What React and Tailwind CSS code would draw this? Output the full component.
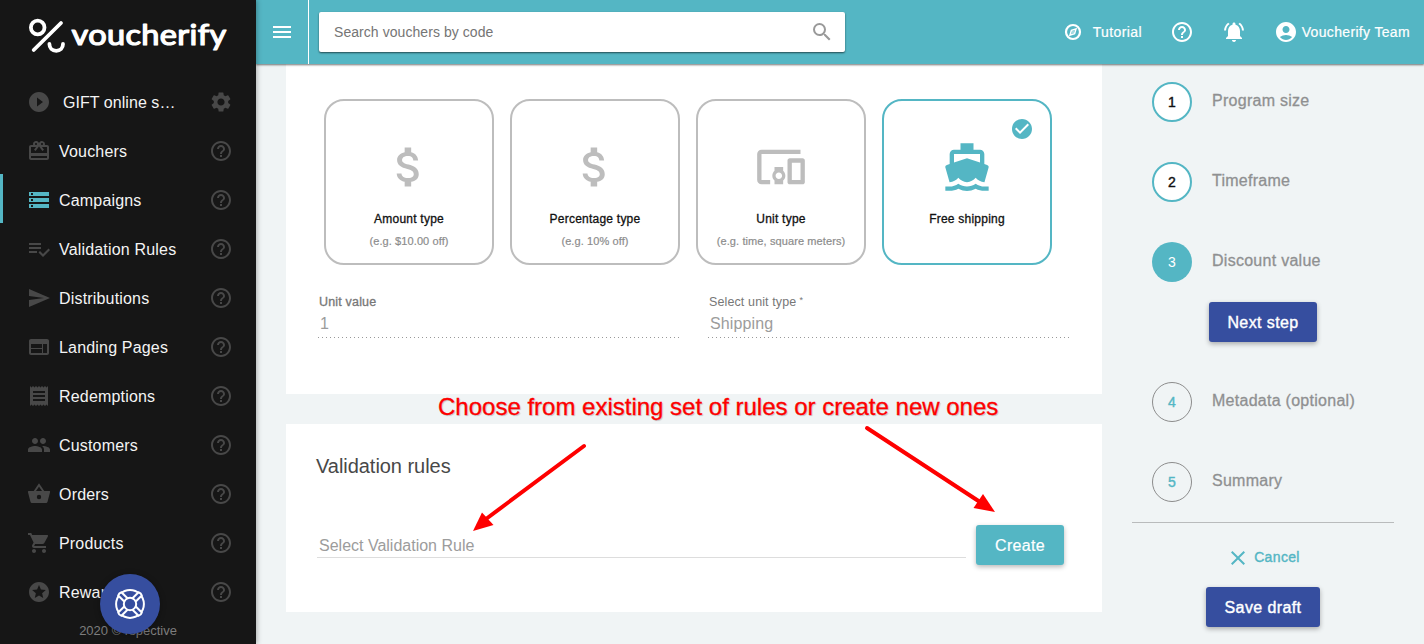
import React from "react";
import {
  MdPlayCircleFilled,
  MdSettings,
  MdRedeem,
  MdStorage,
  MdSend,
  MdWeb,
  MdReceipt,
  MdGroup,
  MdShoppingCart,
  MdStars,
  MdHelpOutline,
  MdNotificationsActive,
  MdAccountCircle,
  MdSearch,
  MdMenu,
  MdAttachMoney,
  MdDevicesOther,
  MdDirectionsBoat,
  MdCheckCircle,
  MdClose,
} from "react-icons/md";

function ListCheckIcon({ size = 24 }) {
  return (
    <svg viewBox="0 0 24 24" width={size} height={size} fill="currentColor">
      <path d="M14 10H2v2h12v-2zm0-4H2v2h12V6zM2 16h8v-2H2v2zm19.500-4.500L23 13l-6.990 7-4.510-4.500L13 14l3.010 3 5.490-5.500z" />
    </svg>
  );
}

function BasketIcon({ size = 24 }) {
  return (
    <svg viewBox="0 0 24 24" width={size} height={size}>
      <path d="M7.500 9.500 12 3l4.500 6.500" fill="none" stroke="currentColor" strokeWidth="1.900" />
      <path
        fill="currentColor"
        fillRule="evenodd"
        d="M1.600 9h20.800c.5 0 .8.400.7.900l-2.500 9.500c-.2.900-1 1.600-2 1.600H5.400c-1 0-1.800-.7-2-1.600L.9 9.900c-.1-.5.200-.9.7-.9zM12 12.800a2.200 2.200 0 1 0 0 4.400 2.200 2.200 0 0 0 0-4.400z"
      />
    </svg>
  );
}

function CompassIcon() {
  return (
    <svg viewBox="0 0 18 18" width="18" height="18" fill="none" stroke="currentColor">
      <circle cx="9" cy="9" r="7" strokeWidth="2.200" />
      <path d="M12 6 7.400 7.400 6 12l4.600-1.400z" strokeWidth="1.500" />
      <circle cx="9" cy="9" r=".5" strokeWidth=".8" />
    </svg>
  );
}

function LifeRingIcon() {
  return (
    <svg viewBox="0 0 32 32" width="32" height="32" fill="none" stroke="#fff" strokeWidth="2" strokeLinejoin="round">
      <circle cx="16" cy="16" r="13.900" />
      {[45, 135, 225, 315].map((a) => (
        <path key={a} d="M13.700 10.500V1.600Q16 .2 18.300 1.600V10.500" fill="#364e9f" transform={`rotate(${a} 16 16)`} />
      ))}
      <circle cx="16" cy="16" r="6.200" fill="#364e9f" />
    </svg>
  );
}

const nav = [
  { label: "Vouchers", icon: MdRedeem },
  { label: "Campaigns", icon: MdStorage, active: true },
  { label: "Validation Rules", icon: ListCheckIcon },
  { label: "Distributions", icon: MdSend },
  { label: "Landing Pages", icon: MdWeb },
  { label: "Redemptions", icon: MdReceipt },
  { label: "Customers", icon: MdGroup },
  { label: "Orders", icon: BasketIcon },
  { label: "Products", icon: MdShoppingCart },
  { label: "Rewards", icon: MdStars },
];

function Logo() {
  return (
    <div className="flex h-[76px] items-start pl-[28px] pt-[18px] text-white">
      <svg width="37" height="36" viewBox="0 0 37 36" fill="none" stroke="currentColor" strokeWidth="3.800" strokeLinecap="round">
        <circle cx="9.700" cy="9.500" r="6.800" />
        <path d="M33 5 5.700 32" />
        <path d="M21.400 26c0 4 2.800 6.800 6.800 6.800s6.800-2.800 6.800-6.800" />
      </svg>
      <svg width="162" height="40" viewBox="0 0 162 40" className="ml-[5px]">
        <text
          x="1.500"
          y="27"
          textLength="155"
          lengthAdjust="spacingAndGlyphs"
          letterSpacing="0.300"
          fontSize="28"
          fontWeight="400"
          fill="currentColor"
          stroke="currentColor"
          strokeWidth="1.200"
          strokeLinejoin="round"
          className="font-['Lato',sans-serif]"
        >
          voucherify
        </text>
      </svg>
    </div>
  );
}

function Sidebar() {
  return (
    <aside className="relative z-20 h-full w-64 shrink-0 bg-[#161616] text-[#484848] shadow-[1px_0_5px_rgba(0,0,0,0.3)]">
      <Logo />
      <div className="flex h-[49px] items-center pl-[27px] pr-[23px] pt-[3px]">
        <MdPlayCircleFilled size={24} />
        <span className="ml-3 flex-1 pt-[2px] text-[16px] tracking-[0.050px] text-[#f4f4f4]">GIFT online s…</span>
        <MdSettings size={24} />
      </div>
      {nav.map(({ label, icon: Icon, active }) => (
        <div
          key={label}
          className={
            "flex h-[49px] items-center border-l-[3px] pl-6 pr-[23px] pt-[3px] " +
            (active ? "border-[#54b6c4]" : "border-transparent")
          }
        >
          <span className={active ? "text-[#54b6c4]" : ""}>
            <Icon size={24} />
          </span>
          <span className="ml-2 flex-1 pt-[2px] text-[16px] tracking-[0.180px] text-[#f4f4f4]">{label}</span>
          <MdHelpOutline size={24} />
        </div>
      ))}
      <div className="mt-[7px] text-center text-[13px] leading-[18px] text-[#7d7d7d]">2020 © rspective</div>
      <button className="absolute left-[100px] top-[574px] flex size-[60px] items-center justify-center rounded-full bg-[#364e9f] shadow-[0_1px_6px_rgba(0,0,0,0.3)]">
        <LifeRingIcon />
      </button>
    </aside>
  );
}

function Header() {
  return (
    <header className="relative z-10 flex h-16 shrink-0 items-center bg-[#54b6c4] text-white shadow-[0_1px_2px_rgba(0,0,0,0.55)]">
      <div className="flex h-16 w-[53px] items-center justify-center border-r border-white">
        <MdMenu size={24} />
      </div>
      <div className="ml-[10px] flex h-10 w-[526px] items-center rounded-[2px] bg-white pl-[15px] pr-[11px] shadow-[0_1px_2px_rgba(0,0,0,0.6)]">
        <span className="flex-1 text-[14px] tracking-[0.060px] text-[#757575]">Search vouchers by code</span>
        <MdSearch size={24} className="text-[#999]" />
      </div>
      <div className="ml-auto flex items-center pr-[14px] text-[14px]">
        <CompassIcon />
        <span className="ml-[11px] w-[77px] tracking-[0.400px] [-webkit-text-stroke:0.200px_#fff]">Tutorial</span>
        <MdHelpOutline size={24} />
        <MdNotificationsActive size={24} className="ml-7" />
        <MdAccountCircle size={24} className="ml-7" />
        <span className="ml-1 tracking-[0.340px] [-webkit-text-stroke:0.200px_#fff]">Voucherify Team</span>
      </div>
    </header>
  );
}

const types = [
  { title: "Amount type", hint: "(e.g. $10.00 off)", icon: MdAttachMoney, size: 52 },
  { title: "Percentage type", hint: "(e.g. 10% off)", icon: MdAttachMoney, size: 52 },
  { title: "Unit type", hint: "(e.g. time, square meters)", icon: MdDevicesOther, size: 52 },
  { title: "Free shipping", hint: "", icon: MdDirectionsBoat, size: 52, selected: true },
];

function TypeCard({ title, hint, icon: Icon, size, selected }) {
  return (
    <div
      className={
        "relative flex h-[166px] w-[170px] flex-col items-center rounded-[20px] border-2 pt-[40px] " +
        (selected ? "border-[#54b6c4] text-[#54b6c4]" : "border-[#bdbdbd] text-[#bdbdbd]")
      }
    >
      {selected && <MdCheckCircle size={24} className="absolute right-4 top-4" />}
      <Icon size={size} />
      <div className="mt-[18px] text-[12px] leading-4 tracking-[0.230px] text-[#111] [-webkit-text-stroke:0.3px_#111]">{title}</div>
      <div className="mt-[6px] text-[11px] leading-4 tracking-[0.100px] text-[#8c8c8c] [-webkit-text-stroke:0.2px_#8c8c8c]">{hint}</div>
    </div>
  );
}

function Field({ label, value, strong, required }) {
  return (
    <div className="w-[362px]">
      <div
        className={
          "h-[18px] pl-px text-[12.500px] leading-[18px] text-[#777] " +
          (strong ? "tracking-[0.180px] [-webkit-text-stroke:0.3px_#777]" : "tracking-[0.120px]")
        }
      >
        {label}
        {required && <span className="ml-[3px] align-[3px] text-[9px] leading-none">*</span>}
      </div>
      <div className="h-[27px] bg-[linear-gradient(to_right,#999_0_1px,transparent_1px)] bg-[length:4px_1px] bg-[position:left_bottom] bg-repeat-x pl-[2px] pt-[2px] text-[16px] leading-[22px] tracking-[0.120px] text-[#9c9c9c]">
        {value}
      </div>
    </div>
  );
}

function Content() {
  return (
    <main className="w-[816px] shrink-0">
      <section className="h-[330px] bg-white pt-[35px]">
        <div className="flex gap-4 pl-[38px]">
          {types.map((t) => (
            <TypeCard key={t.title} {...t} />
          ))}
        </div>
        <div className="mt-7 flex gap-7 pl-8">
          <Field label="Unit value" value="1" strong />
          <Field label="Select unit type" value="Shipping" required />
        </div>
      </section>
      <section className="mt-[30px] h-[188px] bg-white pl-[30px] pt-[30px]">
        <h2 className="text-[20px] leading-6 tracking-[-0.040px] text-[#484848]">Validation rules</h2>
        <div className="mt-[47px] flex items-start">
          <div className="ml-px h-[33px] w-[649px] border-b border-[#ddd] pl-[2px] pt-[9px] text-[16px] leading-6 text-[#9c9c9c]">
            Select Validation Rule
          </div>
          <button className="ml-[10px] h-10 w-[88px] rounded-[3px] bg-[#54b6c4] pt-px text-[16px] tracking-[0.300px] text-white shadow-[0_2px_5px_rgba(0,0,0,0.28)] [-webkit-text-stroke:0.2px_#fff]">
            Create
          </button>
        </div>
      </section>
    </main>
  );
}

function Step({ n, label, state }) {
  const look = {
    done: "border-2 border-[#54b6c4] bg-white text-[#111] [-webkit-text-stroke:0.4px_#111]",
    current: "bg-[#54b6c4] text-white",
    todo: "border border-[#8c8c8c] text-[#54b6c4] [-webkit-text-stroke:0.4px_#54b6c4]",
  }[state];
  return (
    <div className="flex h-10 pl-5">
      <div className={"flex size-10 items-center justify-center rounded-full text-[14px] " + look}>{n}</div>
      <div className="ml-5 pt-[7px] text-[16px] leading-6 tracking-[0.270px] text-[#8f9091] [-webkit-text-stroke:0.3px_#8f9091]">{label}</div>
    </div>
  );
}

function Steps() {
  const button =
    "mx-auto block h-10 rounded-[3px] bg-[#364e9f] pt-px text-[16px] text-white tracking-[0.400px] shadow-[0_2px_5px_rgba(0,0,0,0.3)] [-webkit-text-stroke:0.4px_#fff] ";
  return (
    <aside className="ml-[30px] w-[262px] shrink-0 pt-[18px]">
      <div className="flex flex-col gap-10">
        <Step n="1" label="Program size" state="done" />
        <Step n="2" label="Timeframe" state="done" />
        <Step n="3" label="Discount value" state="current" />
      </div>
      <button className={button + "mt-5 w-[108px]"}>Next step</button>
      <div className="mt-10 flex flex-col gap-10">
        <Step n="4" label="Metadata (optional)" state="todo" />
        <Step n="5" label="Summary" state="todo" />
      </div>
      <div className="mt-5 border-t border-[#b9bbbc]" />
      <div className="mt-[23px] flex h-6 items-center justify-center text-[#54b6c4]">
        <MdClose size={24} />
        <span className="ml-1 pb-[2px] text-[14px] tracking-[0.350px] [-webkit-text-stroke:0.4px_#54b6c4]">Cancel</span>
      </div>
      <button className={button + "mt-[17px] w-[114px]"}>Save draft</button>
    </aside>
  );
}

function Annotation() {
  return (
    <div className="pointer-events-none absolute inset-0 z-30">
      <div className="absolute left-[438px] top-[392px] whitespace-nowrap text-[24px] leading-[30px] text-[#fe0000] [-webkit-text-stroke:0.3px_#fe0000] [text-shadow:1px_1px_1px_rgba(0,0,0,0.2)]">
        Choose from existing set of rules or create new ones
      </div>
      <svg className="absolute inset-0" width="1424" height="644" viewBox="0 0 1424 644" fill="#fe0000" stroke="#fe0000">
        <path d="M584 446 486 519" strokeWidth="4" strokeLinecap="round" />
        <path d="M473 531 482 512.500 493.500 525z" stroke="none" />
        <path d="M867 428 980 502" strokeWidth="4" strokeLinecap="round" />
        <path d="M995 512 983 494 973.500 508z" stroke="none" />
      </svg>
    </div>
  );
}

export default function App() {
  return (
    <div className="relative flex h-[644px] w-[1424px] overflow-hidden bg-[#f0f4f5] font-['Liberation_Sans',Arial,sans-serif]">
      <Sidebar />
      <div className="flex min-w-0 flex-1 flex-col">
        <Header />
        <div className="flex flex-1 pl-[30px]">
          <Content />
          <Steps />
        </div>
      </div>
      <Annotation />
    </div>
  );
}
